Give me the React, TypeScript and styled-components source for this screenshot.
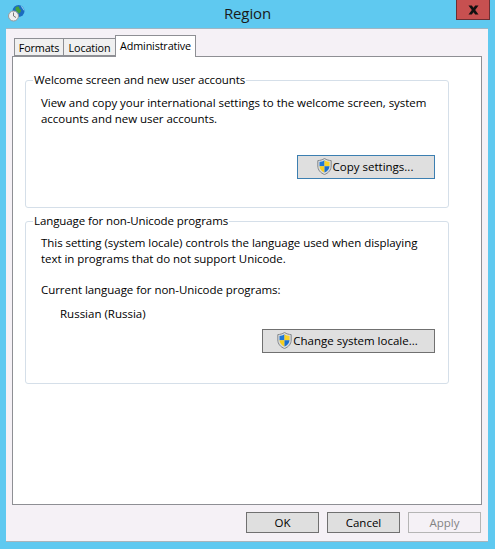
import React from "react";
import styled, { createGlobalStyle } from "styled-components";

const Global = createGlobalStyle`
  html, body { margin: 0; padding: 0; background: #5fc9f0; }
  body { width: 495px; height: 549px; overflow: hidden; }
  * { box-sizing: border-box; }
`;

const Win = styled.div`
  width: 495px; height: 549px; background: #5fc9f0; display: flex; flex-direction: column;
  padding: 0 7px 8px 6px; font-family: "Open Sans", "Liberation Sans", sans-serif; font-size: 11.5px; color: #000;
`;
const TitleBar = styled.div`
  height: 29px; flex: none; display: grid; grid-template-columns: 1fr auto 1fr; margin: 0 -2px 0 0;
`;
const AppIcon = styled.svg`
  width: 18px; height: 18px; margin: 4px 0 0 2px; display: block;
`;
const Title = styled.div`
  font-size: 15px; line-height: 20px; padding-top: 3px; margin-left: -1px; color: #1a1a1a;
  font-family: "Open Sans", sans-serif; letter-spacing: -0.1px;
`;
const CloseCell = styled.div`display: flex; justify-content: flex-end;`;
const Close = styled.div`
  width: 34px; height: 20px; background: #c75050; border: 1px solid #6b2f33; border-top: 0;
  display: flex; align-items: center; justify-content: center;
`;
const Client = styled.div`
  flex: 1; min-height: 0; background: #f5f1f6; padding: 7px 6px 0 6px; display: flex; flex-direction: column;
  box-shadow: 0 1px 0 #a9b4bb, 0 -1px 0 #9fb6c4;
`;
const TabStrip = styled.div`display: flex; align-items: flex-end; height: 20px; padding-left: 2px; position: relative; z-index: 1;`;
const Tab = styled.div<{ $active?: boolean; $w: number }>`
  border: 1px solid #8e8f94;
  border-bottom: ${p => (p.$active ? "none" : "1px solid #8e8f94")};
  margin-bottom: ${p => (p.$active ? "-1px" : "0")};
  background: ${p => (p.$active ? "#fff" : "#f0f0f0")};
  height: ${p => (p.$active ? "22px" : "18px")};
  width: ${p => p.$w}px;
  line-height: ${p => (p.$active ? "19px" : "17px")};
  text-align: center; font-size: 10.8px; letter-spacing: -0.15px; white-space: nowrap;
  & + & { margin-left: -1px; }
`;
const Panel = styled.div`
  height: 449px; flex: none; background: #fff; border: 1px solid #8e8f94; padding: 15px 32px 0 12px;
  display: flex; flex-direction: column; gap: 5px;
`;
const Group = styled.fieldset<{ $h: number }>`
  margin: 0; padding: 0 13px 0 15px; border: 1px solid #d5dfe9; border-radius: 3px; min-width: 0;
  height: ${p => p.$h}px; display: block;
`;
const Legend = styled.legend`
  padding: 0 1px; margin-left: -8px; font-size: 11.5px; letter-spacing: -0.1px; line-height: 16px; height: 16px;
`;
const Para = styled.p<{ $mt?: number }>`margin: ${p => p.$mt || 0}px 0 0 0; line-height: 16px; white-space: pre; letter-spacing: -0.05px;`;
const Indent = styled.p`margin: 8px 0 0 19px; line-height: 16px;`;
const BtnRow = styled.div<{ $mt: number }>`display: flex; justify-content: flex-end; margin-top: ${p => p.$mt}px;`;
const Button = styled.div<{ $w: number; $focus?: boolean; $off?: boolean }>`
  width: ${p => p.$w}px; height: 24px; flex: none; display: flex; align-items: center; justify-content: center; gap: 1px;
  padding: 0 2px 2px 0;
  background: ${p => (p.$off ? "#f5f1f6" : "#dfdfdf")};
  border: 1px solid ${p => (p.$focus ? "#3c7fb1" : p.$off ? "#b5b5b5" : "#707070")};
  color: ${p => (p.$off ? "#838383" : "#000")};
  white-space: nowrap; font-size: 11.5px;
`;
const Footer = styled.div`display: flex; justify-content: flex-end; gap: 8px; padding: 7px 1px 0 0;`;
const FootButton = styled(Button)`height: 21px; padding: 0;`;

const Shield = () => (
  <svg width="15" height="17" viewBox="0 0 15 17">
    <path d="M7.5 .5 C5.5 1.8 3 2.5 .8 2.6 V8 C.8 12 3.5 15 7.5 16.5 C11.5 15 14.2 12 14.2 8 V2.6 C12 2.5 9.5 1.8 7.5 .5Z" fill="#d8dbde" stroke="#85898c" strokeWidth="1" />
    <path d="M7.5 2.2 C6 3.1 4.2 3.8 2.5 3.9 V8.2 H7.5Z" fill="#1f78d6" />
    <path d="M7.5 2.2 C9 3.1 10.8 3.8 12.5 3.9 V8.2 H7.5Z" fill="#f9d326" />
    <path d="M2.5 8.2 H7.5 V14.6 C4.6 13.4 2.7 11.2 2.5 8.2Z" fill="#f7cf1f" />
    <path d="M12.5 8.2 H7.5 V14.6 C10.4 13.4 12.3 11.2 12.5 8.2Z" fill="#1b6fce" />
  </svg>
);

export default function App() {
  return (
    <Win>
      <Global />
      <TitleBar>
        <AppIcon viewBox="0 0 18 18">
          <circle cx="10.5" cy="7" r="6" fill="#1b6cc0" />
          <path d="M7.5 3.5 C8.5 2.5 10 2.2 11 3 C10.7 4.5 12 5 13 6 C12.8 8 11.8 9.5 10.8 9.6 C10 8.5 8.5 7.5 7.5 6Z" fill="#46a03a" />
          <path d="M12.5 1.5 C15 2.5 16.5 5 16.3 7 C15.3 6 13.8 4 12.5 1.5Z" fill="#8fcbef" />
          <circle cx="5.5" cy="12" r="5" fill="#eeeeee" stroke="#9a9a9a" strokeWidth="1" />
          <path d="M5.5 8.5 V12 L8 13.5" fill="none" stroke="#777" strokeWidth="1" />
        </AppIcon>
        <Title>Region</Title>
        <CloseCell>
          <Close>
            <svg width="13" height="10" viewBox="0 0 13 10">
              <path d="M1.5 .5 H4.8 L6.5 2.8 L8.2 .5 H11.5 L8.2 5 L11.5 9.5 H8.2 L6.5 7.2 L4.8 9.5 H1.5 L4.8 5Z" fill="#111" />
            </svg>
          </Close>
        </CloseCell>
      </TitleBar>
      <Client>
        <TabStrip>
          <Tab $w={50}>Formats</Tab>
          <Tab $w={53}>Location</Tab>
          <Tab $active $w={81}>Administrative</Tab>
        </TabStrip>
        <Panel>
          <Group $h={136}>
            <Legend>Welcome screen and new user accounts</Legend>
            <Para $mt={7}>{"View and copy your international settings to the welcome screen, system\naccounts and new user accounts."}</Para>
            <BtnRow $mt={28}>
              <Button $w={138} $focus><Shield />Copy settings...</Button>
            </BtnRow>
          </Group>
          <Group $h={171}>
            <Legend>Language for non-Unicode programs</Legend>
            <Para $mt={6}>{"This setting (system locale) controls the language used when displaying\ntext in programs that do not support Unicode."}</Para>
            <Para $mt={15}>Current language for non-Unicode programs:</Para>
            <Indent>Russian (Russia)</Indent>
            <BtnRow $mt={7}>
              <Button $w={173}><Shield />Change system locale...</Button>
            </BtnRow>
          </Group>
        </Panel>
        <Footer>
          <FootButton $w={73}>OK</FootButton>
          <FootButton $w={73}>Cancel</FootButton>
          <FootButton $w={73} $off>Apply</FootButton>
        </Footer>
      </Client>
    </Win>
  );
}
